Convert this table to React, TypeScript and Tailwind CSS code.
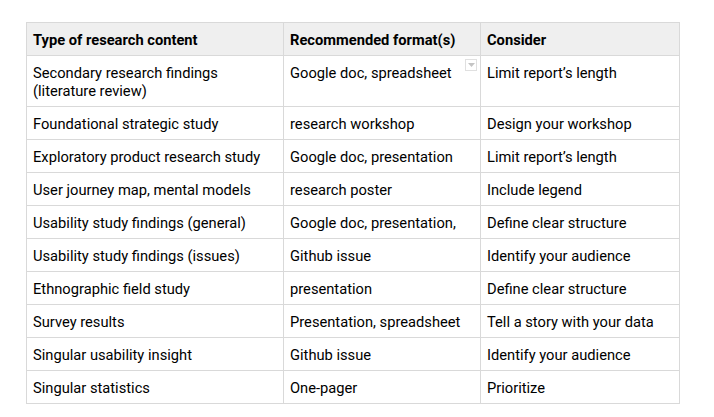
import React from 'react';

type Row = { type: string; format: string; consider: string; dropdown?: boolean };

const rows: Row[] = [
    { type: 'Secondary research findings (literature review)', format: 'Google doc, spreadsheet', consider: 'Limit report’s length', dropdown: true },
    { type: 'Foundational strategic study', format: 'research workshop', consider: 'Design your workshop' },
    { type: 'Exploratory product research study', format: 'Google doc, presentation', consider: 'Limit report’s length' },
    { type: 'User journey map, mental models', format: 'research poster', consider: 'Include legend' },
    { type: 'Usability study findings (general)', format: 'Google doc, presentation,', consider: 'Define clear structure' },
    { type: 'Usability study findings (issues)', format: 'Github issue', consider: 'Identify your audience' },
    { type: 'Ethnographic field study', format: 'presentation', consider: 'Define clear structure' },
    { type: 'Survey results', format: 'Presentation, spreadsheet', consider: 'Tell a story with your data' },
    { type: 'Singular usability insight', format: 'Github issue', consider: 'Identify your audience' },
    { type: 'Singular statistics', format: 'One-pager', consider: 'Prioritize' },
];

const cell = 'border border-[#d9d9d9] align-top pl-[6px] pr-[6px] pt-[8px] pb-[6px] leading-[18px]';

const DropdownHint: React.FC = () => (
    <span className="absolute right-[3px] top-[3px] w-[12px] h-[12px] border border-[#e0e0e0] bg-white flex items-center justify-center">
        <svg width="7" height="4" viewBox="0 0 7 4">
            <path d="M0 0 L7 0 L3.5 4 Z" fill="#c4c4c4" />
        </svg>
    </span>
);

export default function App() {
    return (
        <div className="w-[714px] h-[417px] bg-white pt-[22px] pl-[26px] font-['Roboto','Liberation_Sans',sans-serif] text-[14.7px] text-black">
            <table className="border-collapse table-fixed w-[653px]">
                <colgroup>
                    <col className="w-[257px]" />
                    <col className="w-[197px]" />
                    <col className="w-[199px]" />
                </colgroup>
                <thead>
                    <tr className="bg-[#efefef] h-[33px]">
                        <th className={`${cell} text-left font-bold`}>Type of research content</th>
                        <th className={`${cell} text-left font-bold`}>Recommended format(s)</th>
                        <th className={`${cell} text-left font-bold`}>Consider</th>
                    </tr>
                </thead>
                <tbody>
                    {rows.map((r) => (
                        <tr key={r.type} className="h-[33px]">
                            <td className={cell}>{r.type}</td>
                            <td className={`${cell} relative`}>
                                {r.format}
                                {r.dropdown && <DropdownHint />}
                            </td>
                            <td className={cell}>{r.consider}</td>
                        </tr>
                    ))}
                </tbody>
            </table>
        </div>
    );
}
